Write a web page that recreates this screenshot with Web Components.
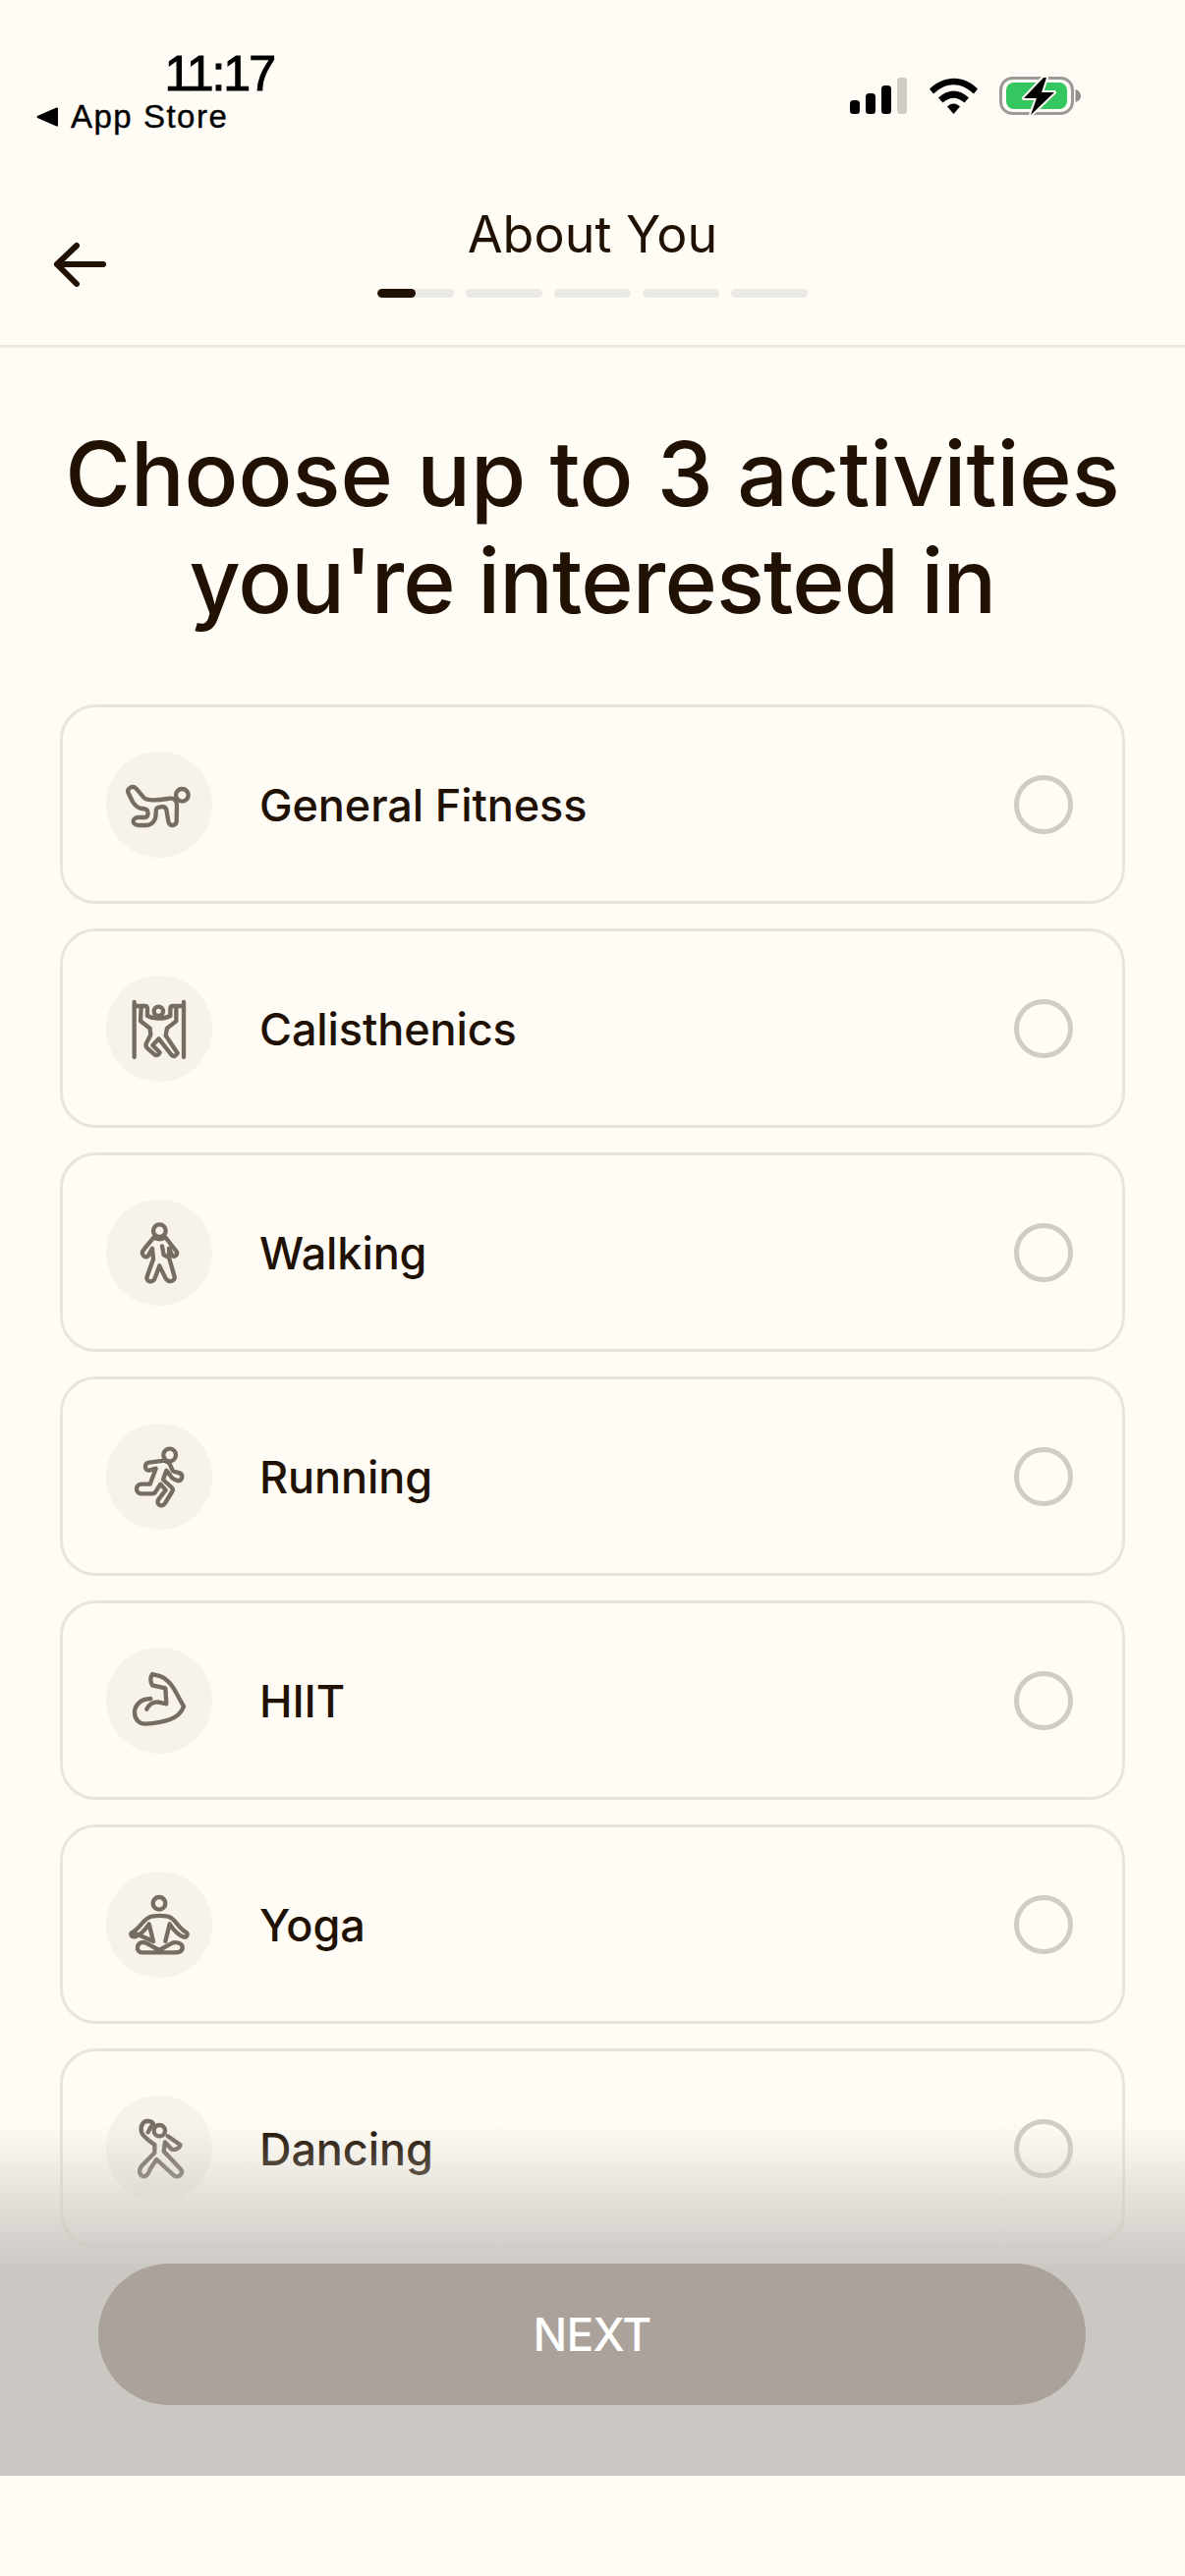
<!DOCTYPE html>
<html lang="en"><head><meta charset="utf-8"><title>About You</title>
<style>
html,body{margin:0;padding:0;background:#fffcf5}
body{font-family:Inter,"Liberation Sans",sans-serif;color:#201103}
h1 span{letter-spacing:-.9px}
</style></head><body>
<onboarding-screen>
  <status-bar slot="status"></status-bar>
  <nav-header slot="header" title="About You" steps="5"></nav-header>
  <h1 slot="title">Choose up to 3 activities<br><span>you're interested in</span></h1>
  <activity-card icon="fitness">General Fitness</activity-card>
  <activity-card icon="calisthenics">Calisthenics</activity-card>
  <activity-card icon="walking">Walking</activity-card>
  <activity-card icon="running">Running</activity-card>
  <activity-card icon="hiit">HIIT</activity-card>
  <activity-card icon="yoga">Yoga</activity-card>
  <activity-card icon="dancing">Dancing</activity-card>
  <footer-cta slot="footer">NEXT</footer-cta>
</onboarding-screen>
<script>
const ICONS={
fitness:['204 195',`<circle cx="436" cy="328" r="19"/><path d="M272 322 C266 308 284 296 296 308 L318 334 C322 340 330 342 345 343 C365 344 385 340 398 338 C412 336 420 345 420 358 L419 408 C418 424 397 424 394 408 L388 372 C385 362 375 362 362 366 C355 368 356 374 356 384 C356 405 345 420 325 420 L302 420 C282 420 282 396 302 396 L322 396 C330 396 333 388 331 378 C330 372 325 370 315 369 C300 368 292 360 285 348 Z"/>`],
calisthenics:['204 879',`<path d="M290 960 V1128 M441 960 V1128 M290 972 H322 Q330 972 330 980 V1002 Q345 1010 364 1010 Q385 1010 400 1002 V980 Q400 972 408 972 H441"/><circle cx="364" cy="988" r="14"/><path d="M311 975 L309 1018 L338 1040 L340 1060 L327 1085 Q322 1095 332 1103 L352 1120 Q362 1126 368 1114 L346 1092 L365 1072 L404 1122 Q414 1130 422 1116 L386 1062 L390 1040 L418 1018 L418 975"/>`],
walking:['204 243',`<circle cx="367" cy="338" r="19"/><path d="M350 358 C340 372 325 385 315 402 C312 412 325 424 332 415 L345 392 L348 425 L330 475 C322 495 345 498 352 485 L367 445 L385 482 C392 498 418 495 412 475 L396 420 L396 392 L405 412 C412 424 425 410 418 400 C405 385 395 370 385 358 C375 366 360 366 350 358 Z M375 385 L380 412 L396 420"/>`],
running:['204 927',`<circle cx="398" cy="1023" r="19"/><path d="M382 1040 L335 1046 C320 1048 320 1070 335 1070 L356 1064 L338 1112 L312 1112 C292 1112 292 1141 312 1141 L346 1141 Q352 1141 355 1135 L370 1112 L386 1130 L363 1160 C356 1176 376 1184 384 1170 L406 1134 Q410 1128 404 1122 L378 1098 L388 1070 L400 1086 Q404 1094 414 1098 L424 1102 C438 1100 440 1082 428 1078 L408 1072 L396 1046 Z"/>`],
hiit:['204 230',`<path d="M345 312 C358 314 372 316 382 324 C398 336 410 352 418 368 L441 410 C434 428 420 442 398 450 C375 458 345 462 325 463 C305 464 292 450 291 430 C290 410 305 392 325 388 L340 386"/><path d="M328 418 C335 402 350 396 362 396 L388 402 L385 354 L345 345 Q335 325 345 312"/>`],
yoga:['204 915',`<circle cx="366" cy="1012" r="19"/><path d="M285 1100 C305 1090 315 1065 335 1055 C350 1048 385 1048 400 1055 C418 1065 428 1090 448 1100 C456 1106 450 1118 440 1114 C420 1108 408 1090 398 1075 L385 1128 M348 1128 L335 1075 C325 1090 312 1108 292 1114 C280 1116 276 1104 285 1100 Z"/><path d="M300 1145 C302 1130 318 1128 330 1135 L366 1155 L402 1135 C415 1128 435 1132 437 1145 C438 1158 428 1162 415 1162 L315 1162 C305 1162 298 1155 300 1145 Z"/>`],
dancing:['24 10',`<circle cx="187" cy="117" r="17"/><path d="M150 88 C135 88 128 105 132 122 C140 140 160 150 172 160 L172 185 L132 225 C125 235 122 250 135 256 C148 260 155 245 158 235 L178 205 L232 255 C245 262 262 248 252 235 L200 180 L204 152 L222 172 C232 180 250 170 250 160 L212 134"/><path d="M150 88 C158 88 165 90 168 96 C160 105 155 115 152 122"/>`]
};

class OnboardingScreen extends HTMLElement{constructor(){super();this.attachShadow({mode:'open'}).innerHTML=`<style>
:host{display:flex;flex-direction:column;position:relative;width:1206px;height:2622px;overflow:hidden;background:#fffcf5;box-sizing:border-box}
.title{padding:74px 0 0;text-align:center}
::slotted(h1){margin:0;font:500 91px/108.500px Inter,"Liberation Sans",sans-serif;letter-spacing:0;color:#201103}
.list{display:flex;flex-direction:column;gap:25px;padding:72px 61px 0}
</style><slot name="status"></slot><slot name="header"></slot><div class="title"><slot name="title"></slot></div><div class="list"><slot></slot></div><slot name="footer"></slot>`}}
customElements.define('onboarding-screen',OnboardingScreen);

class StatusBar extends HTMLElement{constructor(){super();this.attachShadow({mode:'open'}).innerHTML=`<style>
:host{display:flex;justify-content:space-between;height:178px;box-sizing:border-box;padding:52px 106px 0 37px;font-family:"Liberation Sans",Arimo,sans-serif;color:#000}
.left{display:flex;flex-direction:column;width:242px}
.time{font-weight:400;font-size:50px;line-height:47px;align-self:flex-end;letter-spacing:-2px;-webkit-text-stroke:1.100px #000}
.back{display:flex;align-items:center;gap:13px;font-size:33px;line-height:40px;letter-spacing:1.5px;-webkit-text-stroke:.4px #000}
.right{padding-top:26px;display:flex}
svg{display:block;overflow:visible}
</style><div class="left"><div class="time">11:17</div><div class="back"><svg width="22" height="20" viewBox="0 0 22 20"><path d="M22 1.5 V18.5 Q22 20 20.5 19.5 L1 11 Q0 10 1 9 L20.5 .5 Q22 0 22 1.5Z" fill="#000"/></svg><span>App Store</span></div></div>
<div class="right"><svg width="235" height="42" viewBox="0 0 235 42">
<rect x="0" y="24" width="10" height="14" rx="3.5" fill="#000"/><rect x="16" y="17" width="10" height="21" rx="3.5" fill="#000"/><rect x="32" y="9" width="10" height="29" rx="3.5" fill="#000"/><rect x="48" y="1" width="10" height="37" rx="3.5" fill="#cfccc6"/>
<path d="M81 12.5 C96 -2 116 -2 130 12.5 L126 17.5 C113 5 98 5 85 17.5Z M90 21.5 C100 12 111 12 121 21.5 L116.500 26.500 C109 20 102 20 94.500 26.500Z M99 30.500 C103 26.500 108 26.500 112 30.500 L105.500 38Z" fill="#000"/>
<rect x="153.500" y="1.500" width="73" height="36" rx="12" fill="none" stroke="#9b9a96" stroke-width="3"/>
<rect x="159" y="6" width="62" height="27" rx="8" fill="#34c75f"/>
<path d="M229.500 13 C233 14 235 17 235 20 C235 23 233 25 229.500 26Z" fill="#8f8e8a"/>
<path d="M197 1 L177 22 H190 L184 39 L208 16 H195 L200 1Z" fill="#000" stroke="#fffcf5" stroke-width="4" paint-order="stroke" stroke-linejoin="round"/>
</svg></div>`}}
customElements.define('status-bar',StatusBar);

class NavHeader extends HTMLElement{constructor(){super();const n=+this.getAttribute('steps');const t=this.getAttribute('title');
this.attachShadow({mode:'open'}).innerHTML=`<style>
:host{display:block;position:relative;height:176px;box-sizing:border-box;border-bottom:3px solid #ebe9e3}
.c{display:flex;flex-direction:column;align-items:center}
.t{font:400 52px/70px Inter,"Liberation Sans",sans-serif;color:#201103;margin-top:26px}
.p{display:flex;gap:12px;margin-top:20px}
.p i{display:block;width:78px;height:9px;border-radius:5px;background:#ebe9e3;overflow:hidden}
.p i.on::before{content:"";display:block;width:39px;height:9px;border-radius:5px;background:#201103}
svg{position:absolute;left:53px;top:68px}
</style><svg width="56" height="46" viewBox="0 0 56 46" fill="none" stroke="#201103" stroke-width="6" stroke-linecap="round" stroke-linejoin="round"><path d="M5 23 H52 M25 4 L5 23 L25 43"/></svg>
<div class="c"><div class="t">${t}</div><div class="p">${Array.from({length:n},(_,i)=>`<i class="${i?'':'on'}"></i>`).join('')}</div></div>`}}
customElements.define('nav-header',NavHeader);

class ActivityCard extends HTMLElement{constructor(){super();const [o,p]=ICONS[this.getAttribute('icon')];
this.attachShadow({mode:'open'}).innerHTML=`<style>
:host{display:flex;align-items:center;height:203px;box-sizing:border-box;border:3px solid #e8e6dc;border-radius:36px;padding:0 50px 0 44px;background:#fffcf5}
.ic{width:108px;height:108px;border-radius:50%;background:#f7f2ea;flex:none}
.l{flex:1;margin-left:48px;padding-top:2px;font:450 45px/56px Inter,"Liberation Sans",sans-serif;color:#201103;letter-spacing:-.1px}
.r{width:60px;height:60px;box-sizing:border-box;border:5.500px solid #d0ccc6;border-radius:50%;flex:none}
svg{display:block;fill:none;stroke:#756d62;stroke-width:13;stroke-linecap:round;stroke-linejoin:round}
</style><div class="ic"><svg width="108" height="108" viewBox="${o} 324 324">${p}</svg></div><div class="l"><slot></slot></div><div class="r"></div>`}}
customElements.define('activity-card',ActivityCard);

class FooterCta extends HTMLElement{constructor(){super();this.attachShadow({mode:'open'}).innerHTML=`<style>
:host{display:flex;flex-direction:column;position:absolute;left:0;right:0;top:2160px;height:360px;box-sizing:border-box;padding:144px 101px 72px 100px;background:linear-gradient(180deg,rgba(203,200,195,0) 0,#cbc8c3 150px)}
button{all:unset;display:flex;align-items:center;justify-content:center;height:144px;border-radius:72px;background:#aaa29b;color:#fff;font:500 46px/1 Inter,"Liberation Sans",sans-serif;letter-spacing:-.8px;box-sizing:border-box}
</style><button><slot></slot></button>`}}
customElements.define('footer-cta',FooterCta);
</script>
</body></html>
